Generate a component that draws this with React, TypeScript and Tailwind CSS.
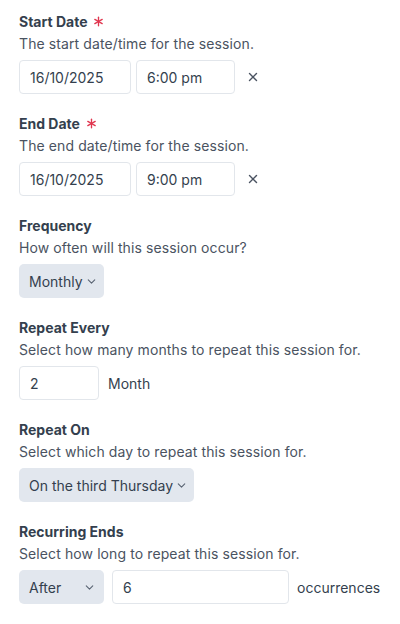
import { Asterisk, ChevronDown, X } from "lucide-react";
import type { ReactNode } from "react";

const Field = ({
  label,
  hint,
  required,
  children,
}: {
  label: string;
  hint: string;
  required?: boolean;
  children: ReactNode;
}) => (
  <div className="flex flex-col">
    <div className="flex items-center gap-[3px] h-[20px] text-[14px] font-bold text-[#343f4e]">
      {label}
      {required && <Asterisk size={17} strokeWidth={1.9} className="text-[#e0364f]" />}
    </div>
    <p className="mt-[3px] h-[20px] text-[14px] leading-[20px] tracking-[0.1px] text-[#4a5361]">{hint}</p>
    <div className="mt-[6px] flex items-center">{children}</div>
  </div>
);

const Box = ({ value, className }: { value: string; className: string }) => (
  <div
    className={`flex items-center h-[34px] px-[10px] border border-[#e2e6eb] rounded-[4px] bg-white text-[14px] text-[#343f4e] ${className}`}
  >
    {value}
  </div>
);

const Select = ({ value, className }: { value: string; className?: string }) => (
  <div
    className={`flex items-center gap-[2px] h-[34px] pl-[10px] pr-[6px] rounded-[5px] bg-[#e2e7ee] text-[14px] text-[#343f4e] whitespace-nowrap ${className ?? ""}`}
  >
    <span>{value}</span>
    <ChevronDown size={13} strokeWidth={2} className="text-[#5a6473]" />
  </div>
);

export default function App() {
  return (
    <div
      className="flex flex-col gap-[19px] px-[19px] pt-[11px] bg-white min-h-[624px]"
      style={{ fontFamily: "Inter, 'Noto Sans', sans-serif" }}
    >
      <Field label="Start Date" hint="The start date/time for the session." required>
        <Box value="16/10/2025" className="w-[112px]" />
        <Box value="6:00 pm" className="w-[99px] ml-[5px]" />
        <X size={14} strokeWidth={2.4} className="ml-[11px] text-[#4a5361]" />
      </Field>
      <Field label="End Date" hint="The end date/time for the session." required>
        <Box value="16/10/2025" className="w-[112px]" />
        <Box value="9:00 pm" className="w-[99px] ml-[5px]" />
        <X size={14} strokeWidth={2.4} className="ml-[11px] text-[#4a5361]" />
      </Field>
      <Field label="Frequency" hint="How often will this session occur?">
        <Select value="Monthly" />
      </Field>
      <Field label="Repeat Every" hint="Select how many months to repeat this session for.">
        <Box value="2" className="w-[80px]" />
        <span className="ml-[9px] text-[14px] text-[#343f4e]">Month</span>
      </Field>
      <Field label="Repeat On" hint="Select which day to repeat this session for.">
        <Select value="On the third Thursday" />
      </Field>
      <Field label="Recurring Ends" hint="Select how long to repeat this session for.">
        <Select value="After" className="w-[85px] justify-between pr-[8px]" />
        <Box value="6" className="w-[177px] ml-[8px]" />
        <span className="ml-[8px] text-[14px] text-[#343f4e]">occurrences</span>
      </Field>
    </div>
  );
}
